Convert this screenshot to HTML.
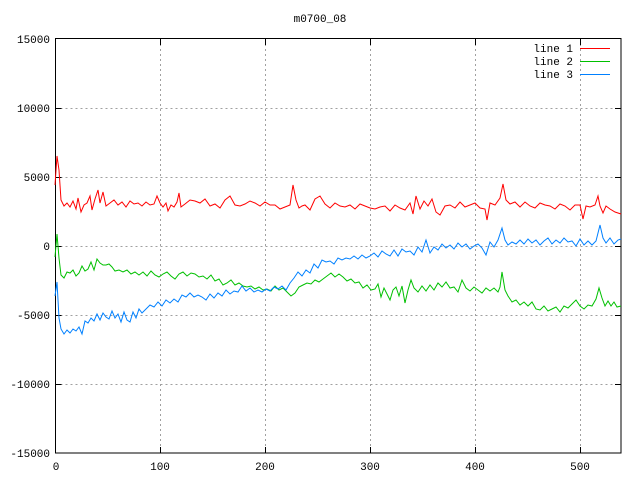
<!DOCTYPE html>
<html><head><meta charset="utf-8"><style>
html,body{margin:0;padding:0;background:#fff;width:640px;height:480px;overflow:hidden}
svg{display:block}
text{font-family:"Liberation Mono",monospace;font-size:11px;fill:#000}
</style></head><body>
<svg width="640" height="480" viewBox="0 0 640 480">
<rect width="640" height="480" fill="#fff"/>
<g stroke="#a0a0a0" stroke-width="1" stroke-dasharray="2,3">
<path d="M55.5 108.5H621M55.5 177.5H621M55.5 246.5H621M55.5 315.5H621M55.5 384.5H621"/>
<path d="M160.5 39V453M265.5 39V453M370.5 39V453M475.5 39V453M580.5 39V453"/>
</g>
<g stroke="#000" stroke-width="1">
<path d="M55.5 108.5h6M55.5 177.5h6M55.5 246.5h6M55.5 315.5h6M55.5 384.5h6M621 108.5h-6M621 177.5h-6M621 246.5h-6M621 315.5h-6M621 384.5h-6"/>
<path d="M160.5 453v-6M265.5 453v-6M370.5 453v-6M475.5 453v-6M580.5 453v-6M160.5 39v6M265.5 39v6M370.5 39v6M475.5 39v6M580.5 39v6"/>
<rect x="55.5" y="38.5" width="565.5" height="414.5" fill="none"/>
</g>
<text x="320" y="22" text-anchor="middle">m0700_08</text>
<g text-anchor="end">
<text x="50" y="43">15000</text><text x="50" y="112">10000</text><text x="50" y="181">5000</text>
<text x="50" y="250">0</text><text x="50" y="319">-5000</text><text x="50" y="388">-10000</text><text x="50" y="457">-15000</text>
</g>
<g text-anchor="middle">
<text x="56" y="470">0</text><text x="160" y="470">100</text><text x="265" y="470">200</text>
<text x="370" y="470">300</text><text x="475" y="470">400</text><text x="580" y="470">500</text>
</g>
<g text-anchor="end">
<text x="573" y="52">line 1</text><text x="573" y="65">line 2</text><text x="573" y="78">line 3</text>
</g>
<path d="M580 48.5h30" stroke="#ff0000"/>
<path d="M580 61.5h30" stroke="#00c000"/>
<path d="M580 74.5h30" stroke="#0080ff"/>
<g fill="none" stroke-width="1">
<polyline stroke="#ff0000" points="55,185 57,156 59,170 61,200 64,206 67,203 70,207 73,201 76,209 78,198 81,212 84,205 87,203 90,196 92,210 95,199 98,190 100,203 103,192 106,206 110,203 114,200 118,205 122,202 126,207 130,201 134,204 138,203 142,206 146,202 150,205 154,204 157,196 160,203 163,207 166,203 168,211 171,205 174,207 177,202 179,193 181,207 185,204 190,200 195,201 200,203 205,199 210,206 215,204 220,208 225,200 230,196 235,205 240,206 245,204 250,201 255,203 260,206 265,202 270,205 275,205 280,209 285,207 290,205 293,185 296,200 299,208 302,206 305,205 310,210 315,199 320,196 325,204 330,208 335,203 340,206 345,207 350,205 355,209 360,204 365,206 370,208 375,209 380,207 385,206 390,211 395,205 400,208 405,210 410,203 413,214 416,196 420,209 424,201 428,206 432,199 436,212 440,215 445,206 450,205 455,208 460,202 465,207 470,205 475,203 480,208 485,209 487,220 490,203 495,205 500,198 503,184 506,200 510,204 515,202 520,207 525,202 530,206 535,208 540,203 545,205 550,206 555,209 560,204 565,206 570,210 575,205 580,205 583,219 586,206 590,207 595,205 598,196 600,206 603,213 606,206 610,209 615,212 621,214"/>
<polyline stroke="#00c000" points="55,257 57,234 59,258 61,275 64,278 67,272 70,273 73,270 76,276 79,273 82,266 85,271 88,269 91,262 94,270 97,259 100,263 103,265 106,265 109,264 112,267 115,271 119,270 123,272 127,270 131,274 135,272 139,275 143,272 147,276 151,271 155,275 159,277 163,274 167,272 171,276 175,279 179,274 183,272 187,276 191,273 195,274 199,277 203,276 207,279 211,275 215,281 219,279 223,285 227,283 231,280 235,285 239,283 243,286 247,287 251,286 255,289 259,287 263,290 267,289 271,291 275,286 279,290 283,288 287,292 291,296 295,293 299,287 303,285 307,283 311,284 315,280 319,282 323,279 327,276 331,273 335,277 339,274 343,277 347,281 351,279 355,283 359,282 363,288 367,285 371,290 375,289 378,284 381,297 384,288 387,294 390,300 393,290 396,287 399,296 402,286 405,303 408,290 411,280 414,288 418,292 422,286 426,291 430,285 434,290 438,283 442,287 446,282 450,288 454,287 458,292 462,280 466,288 470,291 474,287 478,290 482,293 486,288 490,291 494,288 498,292 500,287 502,272 505,290 508,296 512,302 516,300 520,305 524,302 528,306 532,302 536,309 540,310 544,306 548,311 552,309 556,307 560,312 564,306 568,308 572,304 576,300 580,306 584,309 588,305 592,306 596,299 599,288 602,298 605,306 608,301 611,306 614,302 617,307 621,306"/>
<polyline stroke="#0080ff" points="55,296 57,282 59,318 61,329 64,334 67,330 70,333 73,329 76,331 79,327 82,334 85,321 88,323 91,318 94,321 97,314 100,320 103,313 106,317 109,319 112,311 115,318 118,314 121,322 124,312 127,320 130,322 133,312 136,318 139,309 142,313 146,309 150,305 154,307 158,302 162,306 166,300 170,303 174,299 178,302 182,295 186,297 190,293 194,297 198,295 202,297 206,300 210,294 214,298 218,293 222,296 226,290 230,294 234,291 238,292 242,286 246,291 250,288 254,292 258,290 262,292 266,289 270,291 274,287 278,289 282,286 286,290 290,283 294,278 298,272 302,276 306,270 310,273 314,264 318,268 322,260 326,262 330,261 334,264 338,258 342,260 346,258 350,259 354,256 358,259 362,255 366,258 370,256 374,253 378,257 382,251 386,254 390,256 394,250 398,256 402,249 406,252 410,251 414,255 418,247 422,252 426,240 430,253 434,247 438,250 442,244 446,248 450,245 454,249 458,243 462,247 466,244 470,249 474,246 478,244 482,248 486,255 490,242 494,247 498,240 502,228 505,240 508,245 512,242 516,244 520,240 524,244 528,239 532,243 536,240 540,245 544,241 548,238 552,244 556,240 560,243 564,238 568,242 572,241 576,246 580,239 584,245 588,241 592,245 596,241 600,225 603,238 606,243 610,238 614,244 618,240 621,239"/>
</g>
</svg>
</body></html>
